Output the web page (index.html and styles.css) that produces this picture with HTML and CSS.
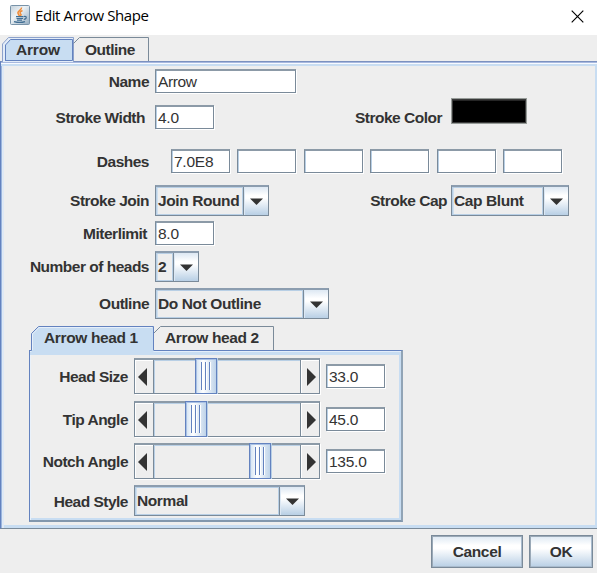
FILE: index.html
```
<!DOCTYPE html>
<html lang="en">
<head>
<meta charset="utf-8">
<title>Edit Arrow Shape</title>
<link rel="stylesheet" href="styles.css">
</head>
<body>
<header class="titlebar">
  <svg class="java" width="20" height="20" viewBox="0 0 20 20">
    <defs><linearGradient id="jg" x1="0" y1="0" x2="1" y2="1"><stop offset="0" stop-color="#c3d0da"/><stop offset=".4" stop-color="#edf2f5"/><stop offset="1" stop-color="#92abc0"/></linearGradient></defs>
    <rect x=".5" y=".5" width="19" height="19" rx="1" fill="url(#jg)" stroke="#7893a9"/>
    <path d="M11.500 2.500C12 5 7 6 8 8.500L9.500 11M12.500 5.500C9.500 7 9.500 8 11 9.500L10.500 11" fill="none" stroke="#ef8a35" stroke-width="1.500"/>
    <path d="M6 11.700h7.500M6.500 13.500h6.500M7 15.200h5M4 16.600q6 1.700 11 0M14 11.500c3-.8 3 2.500-.2 2.800" fill="none" stroke="#426f94" stroke-width="1.200"/>
  </svg>
  <h1 class="title">Edit Arrow Shape</h1>
  <svg class="close" width="13" height="13" viewBox="0 0 13 13"><path d="M.7.7l11.600 11.600M12.300.7L.7 12.300" stroke="#000" stroke-width="1.150"/></svg>
</header>
<nav class="tabs">
  <div class="tab tab-arrow"><svg class="tab-shape" width="72" height="26"><path d="M.5 26V8L6.500 1.500H71.500V26" fill="#e3ecf8" stroke="#8da2cb"/><path d="M3.500 24V9L8.500 3.500H70.500V24.500H3" fill="#c8ddf2" stroke="#6382bf"/></svg><span class="tab-text">Arrow</span></div>
  <div class="tab tab-outline"><svg class="tab-shape" width="76" height="25"><path d="M.5 7.500L6.500 1.500H75.500V25" fill="none" stroke="#7a8a99"/></svg><span class="tab-text">Outline</span></div>
</nav>
<main class="panel">
  <div class="row r-name"><label class="label">Name</label><div class="field wide">Arrow</div></div>
  <div class="row r-width"><label class="label in5">Stroke Width</label><div class="field">4.0</div><label class="label second in9">Stroke Color</label><div class="swatch"></div></div>
  <div class="row r-dash"><label class="label">Dashes</label><div class="dashes"><div class="field">7.0E8</div><div class="field"></div><div class="field"></div><div class="field"></div><div class="field"></div><div class="field"></div></div></div>
  <div class="row r-join"><label class="label">Stroke Join</label>
    <div class="combo c-join"><span class="value">Join Round</span><span class="drop"><svg width="13" height="7"><path d="M0 .5h13L6.500 7z"/></svg></span></div>
    <label class="label cap">Stroke Cap</label>
    <div class="combo c-cap"><span class="value">Cap Blunt</span><span class="drop"><svg width="13" height="7"><path d="M0 .5h13L6.500 7z"/></svg></span></div></div>
  <div class="row r-miter"><label class="label in3">Miterlimit</label><div class="field">8.0</div></div>
  <div class="row r-heads"><label class="label">Number of heads</label><div class="combo c-heads"><span class="value">2</span><span class="drop"><svg width="13" height="7"><path d="M0 .5h13L6.500 7z"/></svg></span></div></div>
  <div class="row r-outline"><label class="label">Outline</label><div class="combo c-outline"><span class="value">Do Not Outline</span><span class="drop"><svg width="13" height="7"><path d="M0 .5h13L6.500 7z"/></svg></span></div></div>
  <section class="heads">
    <nav class="head-tabs">
      <div class="tab tab-h1"><svg class="tab-shape" width="123" height="26"><path d="M.5 24.500V7.500L7.500.5H122.500V24.500V26H.5z" fill="#c8ddf2"/><path d="M.5 24.500V7.500L7.500.5H122.500V24" fill="none" stroke="#6382bf"/><path d="M1.500 24V8L8 1.500H121" fill="none" stroke="#e6effa"/></svg><span class="tab-text">Arrow head 1</span></div>
      <div class="tab tab-h2"><svg class="tab-shape" width="121" height="25"><path d="M.5 7.500L7.500.5H120.500V24" fill="none" stroke="#7a8a99"/></svg><span class="tab-text">Arrow head 2</span></div>
    </nav>
    <div class="head-panel">
      <div class="hrow"><label class="hlabel">Head Size</label>
        <div class="scroll"><span class="btn"><svg width="9" height="18"><path d="M9 0v18L0 9z"/></svg></span><span class="track"><span class="thumb t-size"><i></i><i></i><i></i></span></span><span class="btn right"><svg width="9" height="18"><path d="M0 0v18l9-9z"/></svg></span></div><div class="field">33.0</div></div>
      <div class="hrow h2"><label class="hlabel">Tip Angle</label>
        <div class="scroll"><span class="btn"><svg width="9" height="18"><path d="M9 0v18L0 9z"/></svg></span><span class="track"><span class="thumb t-tip"><i></i><i></i><i></i></span></span><span class="btn right"><svg width="9" height="18"><path d="M0 0v18l9-9z"/></svg></span></div><div class="field">45.0</div></div>
      <div class="hrow h3"><label class="hlabel">Notch Angle</label>
        <div class="scroll"><span class="btn"><svg width="9" height="18"><path d="M9 0v18L0 9z"/></svg></span><span class="track"><span class="thumb t-notch"><i></i><i></i><i></i></span></span><span class="btn right"><svg width="9" height="18"><path d="M0 0v18l9-9z"/></svg></span></div><div class="field">135.0</div></div>
      <div class="hrow h4"><label class="hlabel">Head Style</label><div class="combo c-style"><span class="value">Normal</span><span class="drop"><svg width="13" height="7"><path d="M0 .5h13L6.500 7z"/></svg></span></div></div>
    </div>
  </section>
</main>
<footer class="actions"><button class="button cancel">Cancel</button><button class="button ok">OK</button></footer>
</body>
</html>
```
FILE: styles.css
```
* { box-sizing: border-box; }
body { margin: 0; width: 597px; height: 573px; overflow: hidden; background: #eee; color: #333; font: bold 15.5px/18px "Liberation Sans", Arial, sans-serif; letter-spacing: -.5px; white-space: nowrap; }
svg { display: block; }
.titlebar { height: 35px; background: #fff; display: flex; align-items: flex-start; padding: 5px 13px 0 10px; }
.title { margin: 0 auto 0 5px; color: #000; font: 400 15px/21px "Open Sans", "Noto Sans", sans-serif; letter-spacing: -.42px; }
.close { margin-top: 5px; }
.tabs { height: 26px; display: flex; padding-left: 2px; }
.tab { position: relative; height: 26px; }
.tab-shape { position: absolute; left: 0; top: 0; }
.tabs .tab-shape { top: 1px; }
.tab-text { position: relative; display: block; }
.tab-arrow { width: 71px; padding: 6px 0 0 14px; letter-spacing: -.2px; }
.tab-outline { width: 77px; padding: 6px 0 0 12px; }
.panel { height: 468px; border-top: 1px solid #7b91c0; border-left: 1px solid #6382bf; border-bottom: 1px solid #7a8a99; box-shadow: inset 0 1px #a8b9df, inset 0 2px #f7faff, inset 0 4px #c8ddf2, inset 1px 0 #9bb5dd, inset 3px 0 #dfe9f5, inset -2px 0 #c8ddf2, inset 0 -3px #c8ddf2; padding-top: 7px; }
.row { display: flex; align-items: center; height: 24px; }
.label { width: 148px; padding-top: 2px; margin-right: 6px; text-align: right; flex: none; }
.in5 { padding-right: 4px; }
.in3 { padding-right: 2px; }
.field { width: 59px; height: 24px; flex: none; background: #fff; border: 1px solid #7a8a99; border-top-width: 2px; border-top-color: #8c9aa7; box-shadow: 1px 1px #fff, inset 1px 0 #b8cfe5; font-weight: 400; letter-spacing: -.25px; padding: 2px 0 0 2px; }
.wide { width: 141px; letter-spacing: -.4px; }
.r-width { margin-top: 12px; }
.second { width: 228px; margin-right: 9px; }
.in9 { padding-right: 0; }
.swatch { width: 76px; height: 26px; background: #000; border: 2px solid #393939; box-shadow: inset 0 1px #252525; outline: 1px solid #969b98; outline-offset: -1px; margin-top: -13px; }
.r-dash { margin-top: 20px; }
.dashes { display: flex; gap: 7.400px; margin-left: 16px; }
.r-join { margin-top: 12px; height: 31px; }
.r-join .label, .r-heads .label, .r-outline .label { padding-top: 1px; }
.combo { height: 31px; display: flex; border: 1px solid #7a8a99; border-top: 2px solid #8c9daf; box-shadow: inset 1px 1px #b8cfe5, inset 2px 0 #cfe0ef; }
.value { flex: 1; padding: 5px 0 0 2px; border-right: 1px solid #b8cfe5; border-bottom: 1px solid #b8cfe5; letter-spacing: -.4px; }
.drop { width: 25px; flex: none; display: flex; align-items: center; justify-content: center; border-left: 1px solid #7a8a99; background: linear-gradient(#dde8f3, #fff 30%, #fff 40%, #b8cfe5); fill: #333; box-shadow: inset 1px 0 #dce8f4; }
.c-join { width: 114px; }
.cap { width: 178px; margin-right: 4px; }
.c-cap { width: 118px; }
.r-miter { margin-top: 5px; }
.r-heads { margin-top: 6px; height: 31px; }
.c-heads { width: 44px; }
.r-outline { margin-top: 6px; height: 31px; }
.c-outline { width: 174px; }
.heads { width: 374px; margin: 7px 0 0 28px; }
.head-tabs { height: 24px; display: flex; padding-left: 2px; letter-spacing: -.36px; }
.tab-h1 { width: 122px; padding: 3px 0 0 13px; z-index: 1; }
.tab-h2 { width: 121px; padding: 3px 0 0 12px; }
.head-panel { height: 172px; border: 1px solid #6382bf; border-right: 2px solid #91a4b6; border-bottom: 2px solid #8297ad; box-shadow: inset 0 1px #e4eefa, inset 0 4px #c8ddf2, inset 1px 0 #e9f1fa, inset -2px -2px #c8ddf2; padding-top: 7px; }
.hrow { display: flex; height: 36px; align-items: center; }
.h2 { margin-top: 7px; }
.h3 { margin-top: 6px; }
.h4 { height: 31px; margin-top: 6px; }
.hlabel { width: 98px; margin-right: 6px; padding-top: 2px; text-align: right; }
.hrow .field { margin-left: 6px; }
.scroll { width: 186px; height: 36px; display: flex; border: 1px solid #7a8a99; border-top: 2px solid #8c9aa7; box-shadow: 1px 1px #fff; }
.btn { width: 18px; display: flex; align-items: center; padding-left: 3px; fill: #333; box-shadow: inset 1px 1px #fff; }
.right { padding-left: 6px; }
.track { flex: 1; position: relative; border: 1px solid #7a8a99; border-width: 0 1px; box-shadow: inset 1px 1px #b8cfe5; }
.thumb { position: absolute; top: -2px; width: 22px; height: 36px; border: 1px solid #6382bf; background: linear-gradient(90deg, #d2e2f2, #fff 35%, #bed3e9); box-shadow: inset 1px 1px #a9c1e4, 1px 0 #b8cfe5; display: flex; gap: 2px; justify-content: center; padding-top: 3px; }
.thumb i { width: 2px; height: 28px; background: linear-gradient(90deg, #6382bf 50%, #fff 50%); }
.t-size { left: 41px; }
.t-tip { left: 31px; }
.t-notch { left: 95px; }
.c-style { width: 171px; }
.actions { display: flex; justify-content: flex-end; gap: 6px; padding: 6px 4px 0 0; }
.button { height: 33px; padding: 0; color: #333; border: 1px solid #7a8a99; box-shadow: inset 1px 1px #9aa9b7, inset -1px -1px #a9bbcd; background: linear-gradient(#dde8f3, #fff 30%, #fff 40%, #b8cfe5); font: inherit; letter-spacing: -.35px; }
.cancel { width: 92px; }
.ok { width: 64px; }
```
